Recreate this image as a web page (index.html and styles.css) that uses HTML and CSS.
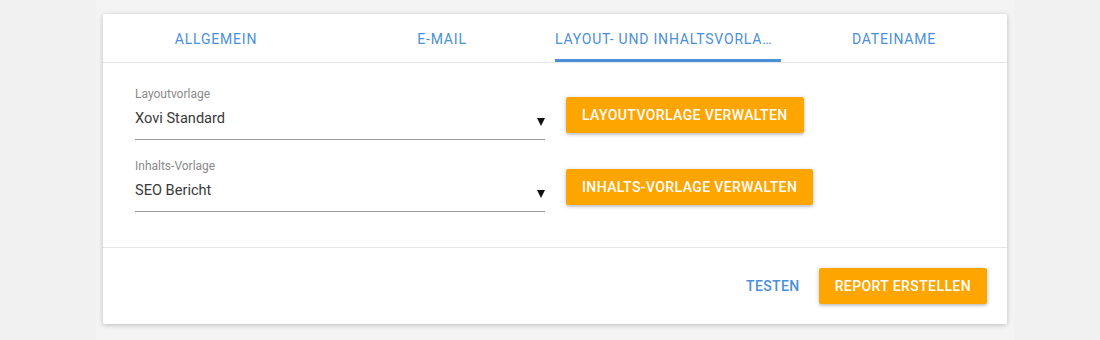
FILE: index.html
```html
<!DOCTYPE html>
<html lang="de">
<head>
  <meta charset="UTF-8">
  <title>Report erstellen</title>
  <link rel="stylesheet" href="styles.css">
</head>
<body>
  <div class="page">
    <div class="card">
      <div class="tabs">
        <div class="tab">Allgemein</div>
        <div class="tab">E-Mail</div>
        <div class="tab active">Layout- und Inhaltsvorlagen</div>
        <div class="tab">Dateiname</div>
      </div>

      <div class="content">
        <div class="row">
          <div class="field">
            <div class="field-label">Layoutvorlage</div>
            <div class="select">
              <span>Xovi Standard</span>
              <span class="arrow"></span>
            </div>
          </div>
          <button class="btn raised">Layoutvorlage verwalten</button>
        </div>

        <div class="row">
          <div class="field">
            <div class="field-label">Inhalts-Vorlage</div>
            <div class="select">
              <span>SEO Bericht</span>
              <span class="arrow"></span>
            </div>
          </div>
          <button class="btn raised">Inhalts-Vorlage verwalten</button>
        </div>
      </div>

      <div class="actions">
        <button class="btn flat">Testen</button>
        <button class="btn raised">Report erstellen</button>
      </div>
    </div>
  </div>
</body>
</html>
```

FILE: styles.css
```css
:root {
  --blue: #4a90d9;
  --orange: #ffa500;
  --text: #333;
  --muted: #8a8a8a;
  --line: #e6e6e6;
}
* { box-sizing: border-box; }
body {
  margin: 0;
  background: #f1f1f1;
  font-family: Roboto, 'Liberation Sans', sans-serif;
  color: var(--text);
}
.page {
  margin-left: 96px;
  width: 918px;
  height: 340px;
  padding: 14px 7px 0;
  background: #f4f4f4;
}
.card {
  width: 904px;
  background: white;
  border-radius: 2px;
  box-shadow: 0 1px 6px rgba(0,0,0,0.12), 0 1px 4px rgba(0,0,0,0.12);
}
.tabs {
  display: flex;
  border-bottom: 1px solid var(--line);
}
.tab {
  flex: 1;
  min-width: 0;
  height: 48px;
  line-height: 50px;
  text-align: center;
  text-transform: uppercase;
  font-size: 14px;
  letter-spacing: 0.8px;
  color: var(--blue);
  white-space: nowrap;
  overflow: hidden;
  text-overflow: ellipsis;
  border-bottom: 3px solid transparent;
}
.tab.active { border-bottom-color: var(--blue); }

.content {
  padding: 23px 32px 35px;
  display: flex;
  flex-direction: column;
  gap: 18px;
}
.row { display: flex; align-items: flex-start; gap: 21px; }
.field { width: 410px; }
.field-label { font-size: 12px; line-height: 16px; color: var(--muted); }
.select {
  display: flex;
  justify-content: space-between;
  align-items: center;
  font-size: 14.6px;
  line-height: 24px;
  padding: 4px 0 9px;
  border-bottom: 1px solid #9a9a9a;
  color: #3a3a3a;
}
.arrow {
  width: 0; height: 0;
  margin-top: 8px;
  border-left: 4.5px solid transparent;
  border-right: 4.5px solid transparent;
  border-top: 8px solid #111;
}

.btn {
  font-family: inherit;
  font-size: 14px;
  font-weight: 500;
  text-transform: uppercase;
  letter-spacing: 0.4px;
  height: 36px;
  padding: 0 16px;
  border: none;
  border-radius: 2px;
  cursor: pointer;
}
.btn.raised {
  background: var(--orange);
  color: white;
  box-shadow: 0 1px 5px rgba(0,0,0,0.2), 0 2px 2px rgba(0,0,0,0.1);
}
.row .btn { margin-top: 11px; }
.btn.flat { background: none; color: var(--blue); padding: 0 8px; }

.actions {
  display: flex;
  justify-content: flex-end;
  align-items: center;
  gap: 11px;
  padding: 20px;
  border-top: 1px solid var(--line);
}
```
